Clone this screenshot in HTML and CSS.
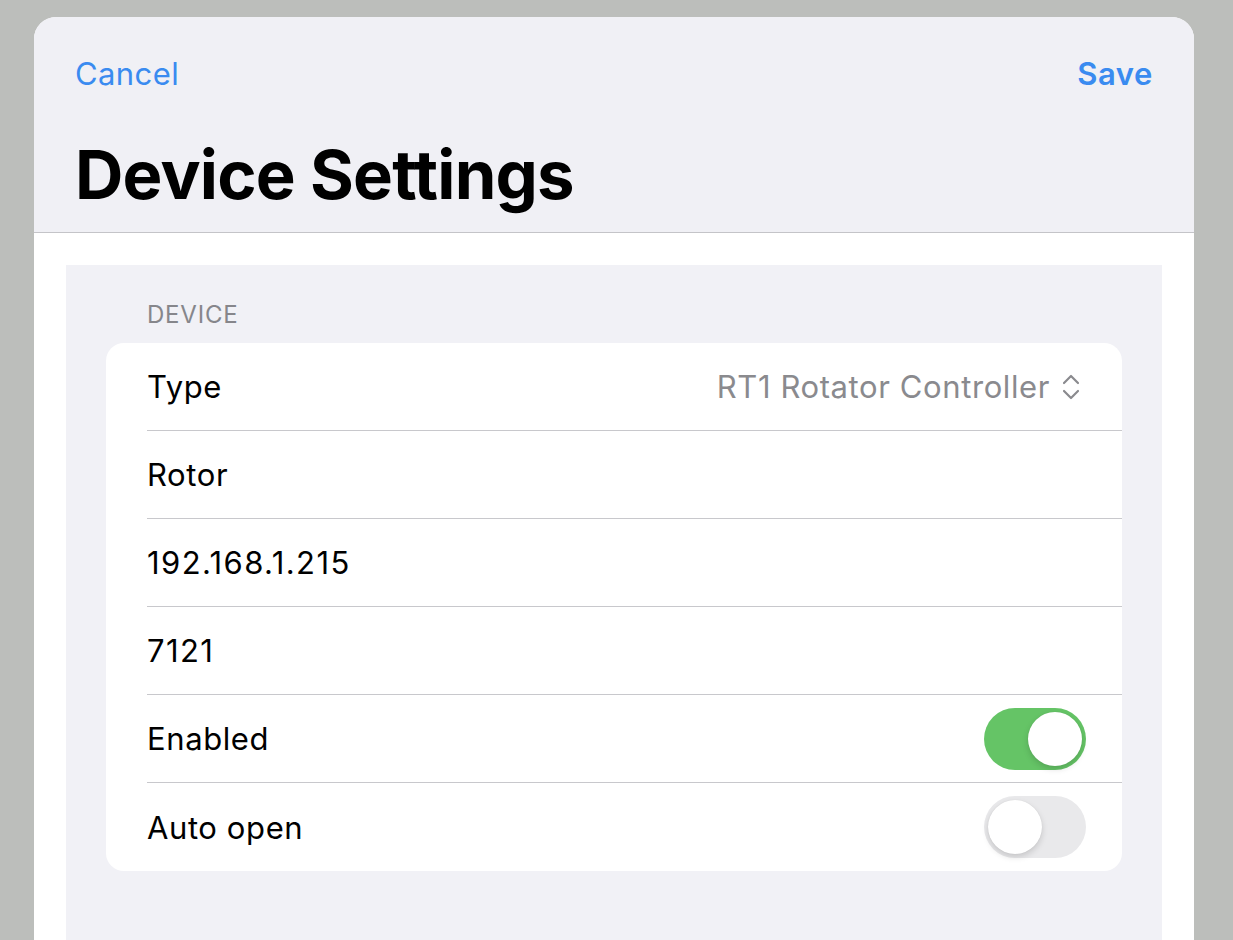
FILE: index.html
```html
<!DOCTYPE html>
<html>
<head>
<meta charset="utf-8">
<link rel="stylesheet" href="styles.css">
</head>
<body>
<div class="sheet">
  <header class="header">
    <div class="navbar">
      <span class="nav-btn">Cancel</span>
      <span class="nav-btn nav-save">Save</span>
    </div>
    <h1 class="title">Device Settings</h1>
  </header>
  <main class="content">
    <section class="group">
      <div class="section-label">DEVICE</div>
      <div class="card">
        <div class="row">
          <span class="row-label">Type</span>
          <span class="row-value">RT1 Rotator Controller
            <svg class="chev" width="18" height="26" viewBox="0 0 18 26"><path d="M2 9 L9 2 L16 9 M2 17 L9 24 L16 17" fill="none" stroke="#8a8a8e" stroke-width="2.2" stroke-linecap="round" stroke-linejoin="round"/></svg>
          </span>
        </div>
        <div class="row"><span class="row-label">Rotor</span></div>
        <div class="row"><span class="row-label num">192.168.1.215</span></div>
        <div class="row"><span class="row-label num">7121</span></div>
        <div class="row">
          <span class="row-label">Enabled</span>
          <span class="toggle on"><span class="knob"></span></span>
        </div>
        <div class="row last">
          <span class="row-label">Auto open</span>
          <span class="toggle"><span class="knob"></span></span>
        </div>
      </div>
    </section>
  </main>
</div>
</body>
</html>
```
FILE: styles.css
```css
html, body {
  margin: 0;
  padding: 0;
  height: 100%;
  overflow: hidden;
}
body {
  background: #bcbebb;
  font-family: Inter, "Noto Sans", sans-serif;
  color: #000;
}
.sheet {
  margin: 17px 39px 0 34px;
  background: #fff;
  border-radius: 22px 22px 0 0;
  overflow: hidden;
  height: 1000px;
}
.header {
  background: #f0f0f5;
  height: 216px;
  border-bottom: 1px solid #c4c4c8;
  box-sizing: border-box;
  padding: 0 41px;
  display: flex;
  flex-direction: column;
}
.navbar {
  display: flex;
  justify-content: space-between;
  align-items: center;
  height: 112px;
}
.nav-btn {
  font-size: 31px;
  color: #3a8bf0;
  letter-spacing: 0.4px;
}
.nav-save {
  font-weight: 600;
  letter-spacing: 0.6px;
}
.title {
  margin: 10px 0 0 0;
  font-size: 67px;
  font-weight: 700;
  line-height: 72px;
  letter-spacing: -0.8px;
}
.content {
  padding: 32px 32px 0 32px;
}
.group {
  background: #f1f1f6;
  padding: 36px 40px 60px 40px;
  height: 800px;
}
.section-label {
  font-size: 24px;
  color: #86868b;
  padding-left: 41px;
  line-height: 28px;
  margin-bottom: 14px;
  letter-spacing: 0.8px;
}
.card {
  background: #fff;
  border-radius: 18px;
  overflow: hidden;
}
.row {
  height: 88px;
  margin-left: 41px;
  padding-right: 36px;
  display: flex;
  align-items: center;
  justify-content: space-between;
  border-bottom: 1px solid #c8c8cc;
  box-sizing: border-box;
}
.row.last {
  border-bottom: none;
}
.row-label {
  font-size: 31px;
  letter-spacing: 0.6px;
}
.row-label.num {
  letter-spacing: 1.4px;
}
.row-value {
  font-size: 31px;
  color: #8a8a8e;
  display: flex;
  align-items: center;
  gap: 12px;
  letter-spacing: 0.6px;
  padding-right: 6px;
}
.chev {
  display: block;
}
.toggle {
  width: 102px;
  height: 62px;
  border-radius: 31px;
  background: #e9e9eb;
  position: relative;
  flex: none;
}
.toggle.on {
  background: #65c466;
}
.knob {
  position: absolute;
  top: 4px;
  left: 4px;
  width: 54px;
  height: 54px;
  border-radius: 50%;
  background: #fff;
  box-shadow: 0 3px 6px rgba(0,0,0,0.15), 0 0 1px rgba(0,0,0,0.1);
}
.toggle.on .knob {
  left: 44px;
}
```
